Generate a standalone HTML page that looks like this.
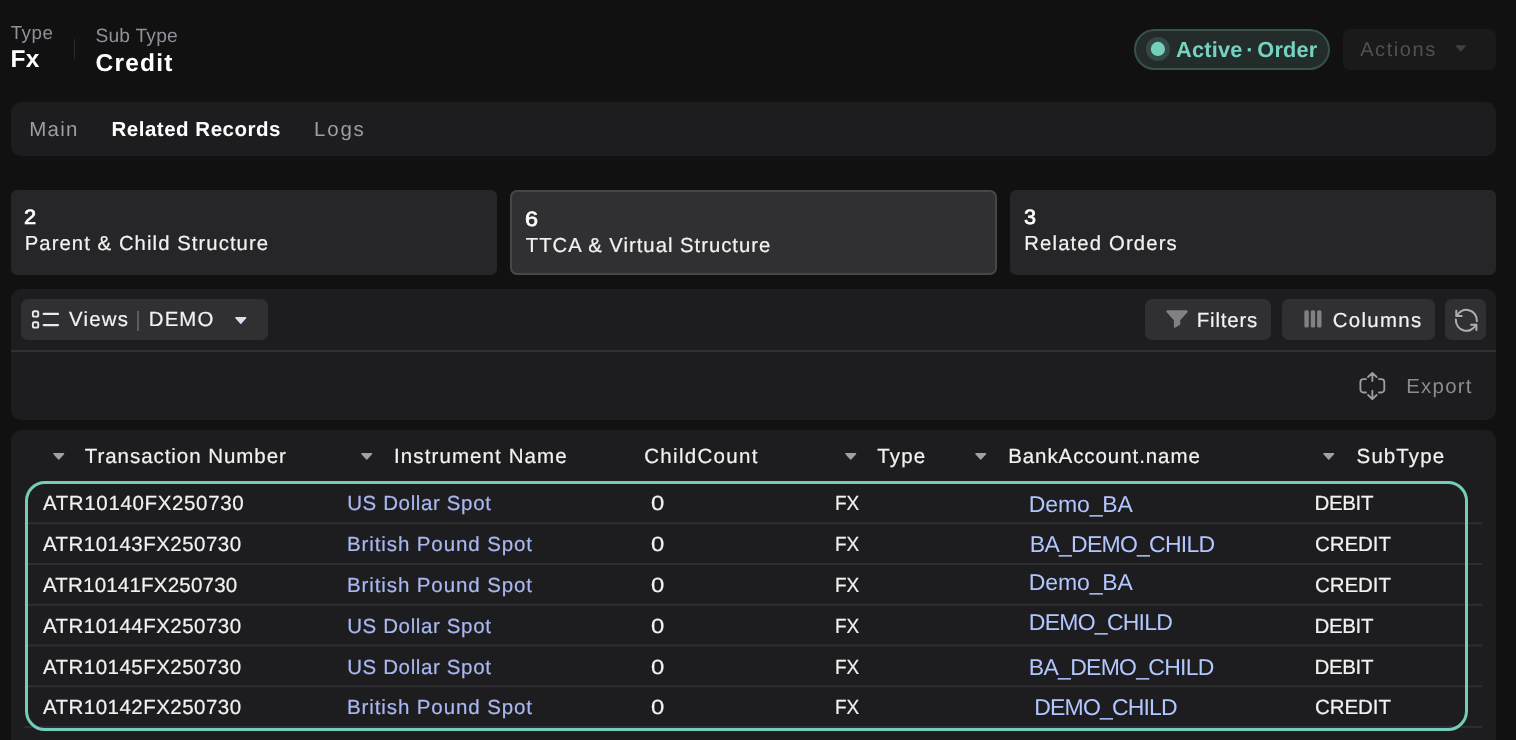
<!DOCTYPE html>
<html lang="en">
<head>
<meta charset="utf-8">
<title>Related Records</title>
<style>
html,body{margin:0;padding:0;}
body{width:1516px;height:740px;overflow:hidden;background:#111111;position:relative;font-family:"Liberation Sans",sans-serif;}
.t{position:absolute;line-height:1;white-space:nowrap;text-rendering:geometricPrecision;}
.b{position:absolute;box-sizing:border-box;}
svg{position:absolute;overflow:visible;}
#txt{position:absolute;left:0;top:0;width:1516px;height:740px;will-change:transform;}

</style>
</head>
<body>
<!-- header divider -->
<div class="b" style="left:74px;top:39px;width:1px;height:20px;background:#2c2c2e"></div>
<!-- status badge -->
<div class="b" style="left:1134px;top:29px;width:196px;height:41px;border-radius:21px;background:#232c2b;border:2px solid #37524c"></div>
<svg style="left:0;top:0" width="1516" height="100" viewBox="0 0 1516 100"><circle cx="1157.900" cy="48.900" r="12" fill="#344845"/><circle cx="1157.900" cy="48.900" r="7.100" fill="#74d0bd"/></svg>
<!-- actions button -->
<div class="b" style="left:1343px;top:29px;width:153px;height:41px;border-radius:7px;background:#1a1a1b"></div>
<svg style="left:1454.6px;top:45px" width="12" height="7"><path d="M0 0.200h11.600L5.800 6.700z" fill="#414144"/></svg>
<!-- tab bar -->
<div class="b" style="left:11px;top:102px;width:1485px;height:54px;border-radius:10px;background:#1d1d1f"></div>
<!-- cards -->
<div class="b" style="left:11px;top:190px;width:486px;height:85px;border-radius:6px;background:#262628"></div>
<div class="b" style="left:510px;top:190px;width:487px;height:85px;border-radius:7px;background:#303032;border:2px solid #474749"></div>
<div class="b" style="left:1010px;top:190px;width:486px;height:85px;border-radius:6px;background:#262628"></div>
<!-- toolbar panel -->
<div class="b" style="left:11px;top:289px;width:1485px;height:131px;border-radius:10px;background:#1d1d1f"></div>
<div class="b" style="left:11px;top:350px;width:1485px;height:2px;background:#303032"></div>
<div class="b" style="left:21px;top:299px;width:247px;height:41px;border-radius:7px;background:#303032"></div>
<div class="b" style="left:1145px;top:299px;width:126px;height:41px;border-radius:7px;background:#303032"></div>
<div class="b" style="left:1282px;top:299px;width:153px;height:41px;border-radius:7px;background:#303032"></div>
<div class="b" style="left:1445px;top:299px;width:41px;height:41px;border-radius:7px;background:#303032"></div>
<!-- views icon -->

<div class="b" style="left:137px;top:311px;width:2px;height:20px;background:#5a5a60"></div>
<svg style="left:235px;top:317px" width="12" height="8"><path d="M0.900 0.100h9.800a.7 .7 0 0 1 .5 1.200L6.300 6.700a.7 .7 0 0 1-1 0L.4 1.300a.7 .7 0 0 1 .5-1.200z" fill="#dcdcf4"/></svg>
<!-- filter icon -->

<!-- columns icon -->

<!-- refresh icon -->

<!-- export icon -->

<!-- icons (absolute page coordinates) -->
<svg style="left:0;top:0" width="1516" height="740" viewBox="0 0 1516 740" fill="none">
<g stroke="#e9e9f6" stroke-width="1.9" stroke-linecap="round">
<rect x="32.850" y="311.250" width="5.400" height="5.400" rx="1.700"/>
<rect x="32.850" y="322.200" width="5.400" height="5.400" rx="1.700"/>
<path d="M43.700 313.950H58M43.700 325.050H58" stroke-width="2.200"/>
</g>
<path d="M1167.500 310.300h19.100a1.150 1.150 0 0 1 .85 1.950L1180.200 320.200v4.500l-4.900 2.900a.85 .85 0 0 1-1.400-.7V320.200L1166.650 312.250a1.150 1.150 0 0 1 .85-1.950z" fill="#808087"/>
<g fill="#808087">
<rect x="1304.400" y="310.300" width="4.400" height="17.300" rx="1.500"/>
<rect x="1310.750" y="310.300" width="4.400" height="17.300" rx="1.500"/>
<rect x="1317.100" y="310.300" width="4.400" height="17.300" rx="1.500"/>
</g>
<g stroke="#adadb8" stroke-width="2" stroke-linecap="round" stroke-linejoin="round">
<path d="M1456.300 310.700V315.900H1461.700"/><path d="M1476.400 330V324.800H1471"/>
<path d="M1456.760 316.080A10.500 10.500 0 0 1 1476.820 321.080"/><path d="M1475.940 324.620A10.500 10.500 0 0 1 1455.880 319.620"/>
</g>
<g stroke="#9c9ca6" stroke-width="1.850" stroke-linecap="round" stroke-linejoin="round">
<path d="M1372.350 381.100V372.900M1368.100 377L1372.350 372.900L1376.600 377"/>
<path d="M1372.350 390.600V399.150M1368.100 395L1372.350 399.150L1376.600 395"/>
<path d="M1366 379.100H1363.400a3 3 0 0 0-3 3V389.500a3 3 0 0 0 3 3H1366"/>
<path d="M1378.900 379.100H1381.300a3 3 0 0 1 3 3V389.500a3 3 0 0 1-3 3H1378.900"/>
</g>
</svg>
<!-- table panel -->
<div class="b" style="left:11px;top:430px;width:1485px;height:320px;border-radius:10px;background:#1d1d1f"></div>
<!-- header carets -->
<svg style="left:53.0px;top:453px" width="12" height="8"><path d="M0.900 0h9.700a.7 .7 0 0 1 .5 1.200L6.250 6.500a.7 .7 0 0 1-1 0L.4 1.200a.7 .7 0 0 1 .5-1.200z" fill="#a0a0aa"/></svg>
<svg style="left:361.2px;top:453px" width="12" height="8"><path d="M0.900 0h9.700a.7 .7 0 0 1 .5 1.200L6.250 6.500a.7 .7 0 0 1-1 0L.4 1.200a.7 .7 0 0 1 .5-1.200z" fill="#a0a0aa"/></svg>
<svg style="left:844.9px;top:453px" width="12" height="8"><path d="M0.900 0h9.700a.7 .7 0 0 1 .5 1.200L6.250 6.500a.7 .7 0 0 1-1 0L.4 1.200a.7 .7 0 0 1 .5-1.200z" fill="#a0a0aa"/></svg>
<svg style="left:975.0px;top:453px" width="12" height="8"><path d="M0.900 0h9.700a.7 .7 0 0 1 .5 1.200L6.250 6.500a.7 .7 0 0 1-1 0L.4 1.200a.7 .7 0 0 1 .5-1.200z" fill="#a0a0aa"/></svg>
<svg style="left:1323.4px;top:453px" width="12" height="8"><path d="M0.900 0h9.700a.7 .7 0 0 1 .5 1.200L6.250 6.500a.7 .7 0 0 1-1 0L.4 1.200a.7 .7 0 0 1 .5-1.200z" fill="#a0a0aa"/></svg>
<!-- row separators -->
<svg style="left:0;top:0" width="1516" height="740" viewBox="0 0 1516 740">
<rect x="24.300" y="522.30" width="1457.700" height="2" fill="#2e2e30"/>
<rect x="24.300" y="563.04" width="1457.700" height="2" fill="#2e2e30"/>
<rect x="24.300" y="603.78" width="1457.700" height="2" fill="#2e2e30"/>
<rect x="24.300" y="644.52" width="1457.700" height="2" fill="#2e2e30"/>
<rect x="24.300" y="685.26" width="1457.700" height="2" fill="#2e2e30"/>
<rect x="24.300" y="726.00" width="1457.700" height="2" fill="#2e2e30"/>
</svg>
<!-- teal highlight -->
<div class="b" style="left:25px;top:481px;width:1443px;height:250px;border:3px solid #72cdbb;border-radius:20px"></div>

<div id="txt">
<header>
<span class="t" id="t_type" style="left:10.63px;top:23.93px;font-size:18.75px;color:#909098;letter-spacing:0.549px;">Type</span>
<span class="t" id="t_fx" style="left:10.49px;top:48.26px;font-size:24.50px;color:#ffffff;font-weight:700;letter-spacing:0.214px;">Fx</span>
<span class="t" id="t_subtype" style="left:95.38px;top:26.60px;font-size:19.25px;color:#909098;letter-spacing:0.204px;">Sub Type</span>
<span class="t" id="t_credit" style="left:95.54px;top:52.26px;font-size:24.50px;color:#ffffff;font-weight:700;letter-spacing:1.208px;">Credit</span>
<span class="t" id="t_active" style="left:1176.11px;top:38.69px;font-size:21.75px;color:#76d3c1;font-weight:700;letter-spacing:0.179px;word-spacing:-2.5px;">Active · Order</span>
<span class="t" id="t_actions" style="left:1360.15px;top:40.07px;font-size:20.00px;color:#515154;letter-spacing:1.598px;">Actions</span>
</header>
<nav>
<span class="t" id="t_main" style="left:29.14px;top:119.65px;font-size:20.50px;color:#9d9da6;letter-spacing:1.301px;">Main</span>
<span class="t" id="t_related" style="left:111.52px;top:119.65px;font-size:20.50px;color:#ffffff;font-weight:700;letter-spacing:0.508px;">Related Records</span>
<span class="t" id="t_logs" style="left:314.08px;top:119.65px;font-size:20.50px;color:#9d9da6;letter-spacing:1.779px;">Logs</span>
</nav>
<section class="cards">
<span class="t" id="c1n" style="left:24.02px;top:208.44px;font-size:20.75px;color:#ffffff;-webkit-text-stroke:0.70px;transform:scaleX(1.051);transform-origin:0 0;">2</span>
<span class="t" id="c1t" style="left:24.71px;top:233.76px;font-size:20.25px;color:#f2f2f2;-webkit-text-stroke:0.20px;letter-spacing:1.086px;">Parent &amp; Child Structure</span>
<span class="t" id="c2n" style="left:525.48px;top:210.34px;font-size:20.75px;color:#ffffff;-webkit-text-stroke:0.70px;transform:scaleX(1.132);transform-origin:0 0;">6</span>
<span class="t" id="c2t" style="left:525.85px;top:236.06px;font-size:20.25px;color:#f2f2f2;-webkit-text-stroke:0.20px;letter-spacing:1.000px;">TTCA &amp; Virtual Structure</span>
<span class="t" id="c3n" style="left:1024.44px;top:208.44px;font-size:20.75px;color:#ffffff;-webkit-text-stroke:0.70px;transform:scaleX(1.042);transform-origin:0 0;">3</span>
<span class="t" id="c3t" style="left:1024.30px;top:233.76px;font-size:20.25px;color:#f2f2f2;-webkit-text-stroke:0.20px;letter-spacing:1.160px;">Related Orders</span>
</section>
<div class="toolbar">
<span class="t" id="b_views" style="left:68.96px;top:309.93px;font-size:20.40px;color:#f2f2f2;-webkit-text-stroke:0.20px;letter-spacing:1.221px;">Views</span>
<span class="t" id="b_demo" style="left:148.86px;top:309.93px;font-size:20.40px;color:#f2f2f2;-webkit-text-stroke:0.20px;letter-spacing:1.073px;">DEMO</span>
<span class="t" id="b_filters" style="left:1196.77px;top:310.73px;font-size:20.40px;color:#f2f2f2;-webkit-text-stroke:0.20px;letter-spacing:0.819px;">Filters</span>
<span class="t" id="b_columns" style="left:1332.74px;top:310.73px;font-size:20.40px;color:#f2f2f2;-webkit-text-stroke:0.20px;letter-spacing:1.314px;">Columns</span>
<span class="t" id="b_export" style="left:1406.23px;top:376.73px;font-size:20.40px;color:#8b8b92;letter-spacing:1.272px;">Export</span>
</div>
<div role="table" class="grid">
<div role="row" class="thead">
<span class="t" id="h1" style="left:84.76px;top:446.75px;font-size:20.50px;color:#f2f2f2;-webkit-text-stroke:0.20px;letter-spacing:0.949px;">Transaction Number</span>
<span class="t" id="h2" style="left:394.05px;top:446.75px;font-size:20.50px;color:#f2f2f2;-webkit-text-stroke:0.20px;letter-spacing:1.100px;">Instrument Name</span>
<span class="t" id="h3" style="left:644.27px;top:446.75px;font-size:20.50px;color:#f2f2f2;-webkit-text-stroke:0.20px;letter-spacing:1.297px;">ChildCount</span>
<span class="t" id="h4" style="left:877.25px;top:446.75px;font-size:20.50px;color:#f2f2f2;-webkit-text-stroke:0.20px;letter-spacing:1.134px;">Type</span>
<span class="t" id="h5" style="left:1008.14px;top:446.75px;font-size:20.50px;color:#f2f2f2;-webkit-text-stroke:0.20px;letter-spacing:0.931px;">BankAccount.name</span>
<span class="t" id="h6" style="left:1356.61px;top:446.75px;font-size:20.50px;color:#f2f2f2;-webkit-text-stroke:0.20px;letter-spacing:1.093px;">SubType</span>
</div>
<div role="row">
<span class="t" id="r0a" style="left:42.92px;top:493.65px;font-size:20.50px;color:#f2f2f2;-webkit-text-stroke:0.20px;letter-spacing:0.644px;">ATR10140FX250730</span>
<span class="t" id="r0b" style="left:347.15px;top:493.65px;font-size:20.50px;color:#a9b8f1;-webkit-text-stroke:0.20px;letter-spacing:0.625px;">US Dollar Spot</span>
<span class="t" id="r0c" style="left:650.53px;top:493.65px;font-size:20.50px;color:#f2f2f2;-webkit-text-stroke:0.20px;transform:scaleX(1.164);transform-origin:0 0;">0</span>
<span class="t" id="r0d" style="left:835.37px;top:493.65px;font-size:20.50px;color:#f2f2f2;-webkit-text-stroke:0.20px;transform:scaleX(0.928);transform-origin:0 0;">FX</span>
<span class="t" id="r0e" style="left:1028.86px;top:493.23px;font-size:23.00px;color:#b2c6ff;letter-spacing:-0.141px;">Demo_BA</span>
<span class="t" id="r0f" style="left:1314.41px;top:493.65px;font-size:20.50px;color:#f2f2f2;-webkit-text-stroke:0.20px;letter-spacing:-0.313px;">DEBIT</span>
</div>
<div role="row">
<span class="t" id="r1a" style="left:42.92px;top:534.65px;font-size:20.50px;color:#f2f2f2;-webkit-text-stroke:0.20px;letter-spacing:0.476px;">ATR10143FX250730</span>
<span class="t" id="r1b" style="left:346.95px;top:534.65px;font-size:20.50px;color:#a9b8f1;-webkit-text-stroke:0.20px;letter-spacing:0.900px;">British Pound Spot</span>
<span class="t" id="r1c" style="left:650.53px;top:534.65px;font-size:20.50px;color:#f2f2f2;-webkit-text-stroke:0.20px;transform:scaleX(1.164);transform-origin:0 0;">0</span>
<span class="t" id="r1d" style="left:835.37px;top:534.65px;font-size:20.50px;color:#f2f2f2;-webkit-text-stroke:0.20px;transform:scaleX(0.928);transform-origin:0 0;">FX</span>
<span class="t" id="r1e" style="left:1029.86px;top:533.13px;font-size:23.00px;color:#b2c6ff;letter-spacing:-0.757px;">BA_DEMO_CHILD</span>
<span class="t" id="r1f" style="left:1314.91px;top:534.65px;font-size:20.50px;color:#f2f2f2;-webkit-text-stroke:0.20px;letter-spacing:-0.051px;">CREDIT</span>
</div>
<div role="row">
<span class="t" id="r2a" style="left:42.92px;top:575.65px;font-size:20.50px;color:#f2f2f2;-webkit-text-stroke:0.20px;letter-spacing:0.210px;">ATR10141FX250730</span>
<span class="t" id="r2b" style="left:346.95px;top:575.65px;font-size:20.50px;color:#a9b8f1;-webkit-text-stroke:0.20px;letter-spacing:0.900px;">British Pound Spot</span>
<span class="t" id="r2c" style="left:650.53px;top:575.65px;font-size:20.50px;color:#f2f2f2;-webkit-text-stroke:0.20px;transform:scaleX(1.164);transform-origin:0 0;">0</span>
<span class="t" id="r2d" style="left:835.37px;top:575.65px;font-size:20.50px;color:#f2f2f2;-webkit-text-stroke:0.20px;transform:scaleX(0.928);transform-origin:0 0;">FX</span>
<span class="t" id="r2e" style="left:1028.86px;top:571.33px;font-size:23.00px;color:#b2c6ff;letter-spacing:-0.141px;">Demo_BA</span>
<span class="t" id="r2f" style="left:1314.91px;top:575.65px;font-size:20.50px;color:#f2f2f2;-webkit-text-stroke:0.20px;letter-spacing:-0.051px;">CREDIT</span>
</div>
<div role="row">
<span class="t" id="r3a" style="left:42.92px;top:617.45px;font-size:20.50px;color:#f2f2f2;-webkit-text-stroke:0.20px;letter-spacing:0.476px;">ATR10144FX250730</span>
<span class="t" id="r3b" style="left:347.15px;top:617.45px;font-size:20.50px;color:#a9b8f1;-webkit-text-stroke:0.20px;letter-spacing:0.625px;">US Dollar Spot</span>
<span class="t" id="r3c" style="left:650.53px;top:617.45px;font-size:20.50px;color:#f2f2f2;-webkit-text-stroke:0.20px;transform:scaleX(1.164);transform-origin:0 0;">0</span>
<span class="t" id="r3d" style="left:835.37px;top:617.45px;font-size:20.50px;color:#f2f2f2;-webkit-text-stroke:0.20px;transform:scaleX(0.928);transform-origin:0 0;">FX</span>
<span class="t" id="r3e" style="left:1028.86px;top:611.23px;font-size:23.00px;color:#b2c6ff;letter-spacing:-0.752px;">DEMO_CHILD</span>
<span class="t" id="r3f" style="left:1314.41px;top:617.45px;font-size:20.50px;color:#f2f2f2;-webkit-text-stroke:0.20px;letter-spacing:-0.313px;">DEBIT</span>
</div>
<div role="row">
<span class="t" id="r4a" style="left:42.92px;top:658.35px;font-size:20.50px;color:#f2f2f2;-webkit-text-stroke:0.20px;letter-spacing:0.476px;">ATR10145FX250730</span>
<span class="t" id="r4b" style="left:347.15px;top:658.35px;font-size:20.50px;color:#a9b8f1;-webkit-text-stroke:0.20px;letter-spacing:0.625px;">US Dollar Spot</span>
<span class="t" id="r4c" style="left:650.53px;top:658.35px;font-size:20.50px;color:#f2f2f2;-webkit-text-stroke:0.20px;transform:scaleX(1.164);transform-origin:0 0;">0</span>
<span class="t" id="r4d" style="left:835.37px;top:658.35px;font-size:20.50px;color:#f2f2f2;-webkit-text-stroke:0.20px;transform:scaleX(0.928);transform-origin:0 0;">FX</span>
<span class="t" id="r4e" style="left:1028.86px;top:656.33px;font-size:23.00px;color:#b2c6ff;letter-spacing:-0.722px;">BA_DEMO_CHILD</span>
<span class="t" id="r4f" style="left:1314.41px;top:658.35px;font-size:20.50px;color:#f2f2f2;-webkit-text-stroke:0.20px;letter-spacing:-0.313px;">DEBIT</span>
</div>
<div role="row">
<span class="t" id="r5a" style="left:42.92px;top:697.95px;font-size:20.50px;color:#f2f2f2;-webkit-text-stroke:0.20px;letter-spacing:0.476px;">ATR10142FX250730</span>
<span class="t" id="r5b" style="left:346.95px;top:697.95px;font-size:20.50px;color:#a9b8f1;-webkit-text-stroke:0.20px;letter-spacing:0.900px;">British Pound Spot</span>
<span class="t" id="r5c" style="left:650.53px;top:697.95px;font-size:20.50px;color:#f2f2f2;-webkit-text-stroke:0.20px;transform:scaleX(1.164);transform-origin:0 0;">0</span>
<span class="t" id="r5d" style="left:835.37px;top:697.95px;font-size:20.50px;color:#f2f2f2;-webkit-text-stroke:0.20px;transform:scaleX(0.928);transform-origin:0 0;">FX</span>
<span class="t" id="r5e" style="left:1034.22px;top:696.33px;font-size:23.00px;color:#b2c6ff;letter-spacing:-0.815px;">DEMO_CHILD</span>
<span class="t" id="r5f" style="left:1314.91px;top:697.95px;font-size:20.50px;color:#f2f2f2;-webkit-text-stroke:0.20px;letter-spacing:-0.051px;">CREDIT</span>
</div>
</div>
</div>
</body>
</html>
